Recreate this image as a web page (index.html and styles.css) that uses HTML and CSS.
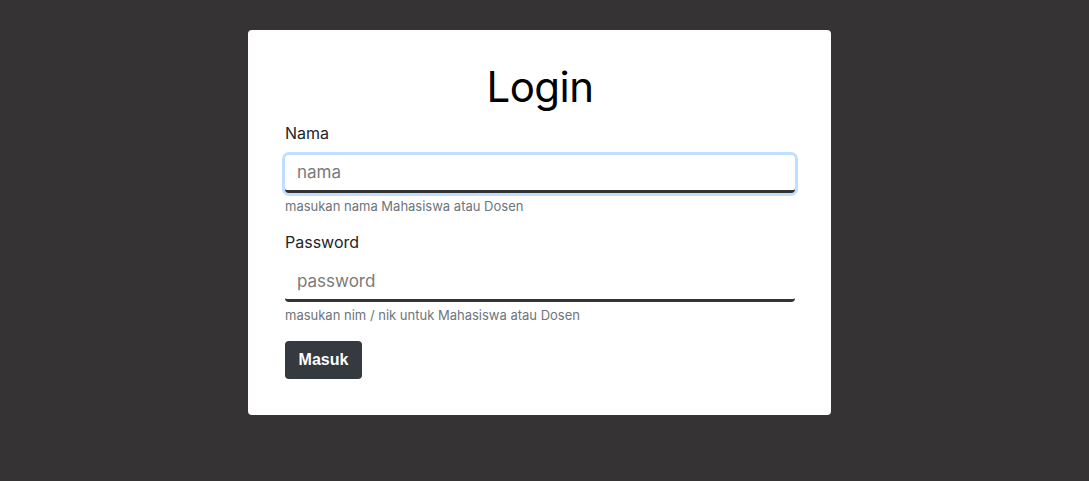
FILE: index.html
```html
<!DOCTYPE html>
<html lang="id">
<head>
<meta charset="utf-8">
<title>Login</title>
<link rel="stylesheet" href="styles.css">
</head>
<body>
<main class="page">
  <form class="card">
    <h1 class="title">Login</h1>
    <div class="field">
      <label class="label" for="nama">Nama</label>
      <input class="input input-focus" id="nama" type="text" placeholder="nama">
      <small class="help">masukan nama Mahasiswa atau Dosen</small>
    </div>
    <div class="field">
      <label class="label" for="password">Password</label>
      <input class="input" id="password" type="password" placeholder="password">
      <small class="help">masukan nim / nik untuk Mahasiswa atau Dosen</small>
    </div>
    <button class="btn" type="button">Masuk</button>
  </form>
</main>
</body>
</html>
```

FILE: styles.css
```css
* { box-sizing: border-box; }
html, body { margin: 0; padding: 0; }
body {
  background: #353334;
  font-family: Inter, "Noto Sans", sans-serif;
  color: #212529;
  height: 481px;
}
.page {
  display: flex;
  justify-content: center;
  padding-top: 30px;
  padding-right: 10px;
}
.card {
  width: 583px;
  height: 385px;
  background: #fff;
  border-radius: 4px;
  padding: 28px 36px 0 37px;
  display: flex;
  flex-direction: column;
}
.title {
  margin: 0 0 7px;
  text-align: center;
  font-weight: 400;
  font-size: 42px;
  line-height: 58px;
  color: #000;
  letter-spacing: -0.5px;
}
.field {
  display: flex;
  flex-direction: column;
  margin-bottom: 18px;
}
.label {
  font-size: 16px;
  line-height: 20px;
  margin-bottom: 12px;
}
.input {
  width: 510px;
  height: 38px;
  border: none;
  border-bottom: 3px solid #333;
  border-radius: 4px;
  padding: 0 12px 2px;
  font-family: inherit;
  font-size: 17px;
  color: #212529;
  outline: none;
  background: #fff;
}
.input::placeholder { color: #7a7a7a; }
.input-focus { box-shadow: 0 0 0 3px #c2deff; }
.help {
  font-size: 13px;
  line-height: 16px;
  margin-top: 5px;
  color: #6c757d;
}
.btn {
  align-self: flex-start;
  width: 77px;
  height: 38px;
  background: #343a40;
  color: #fff;
  border: none;
  border-radius: 4px;
  font-family: "Liberation Sans", Arial, sans-serif;
  font-weight: 700;
  font-size: 16px;
  margin-top: 0;
}
```
